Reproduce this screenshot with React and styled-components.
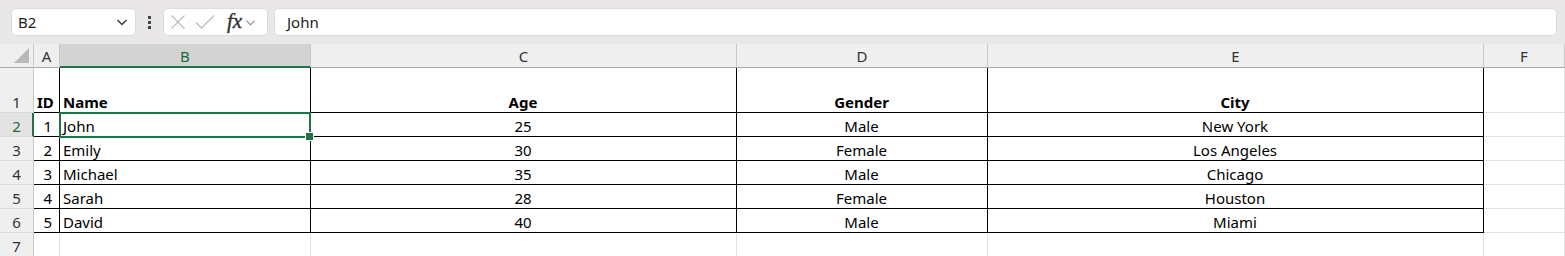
import React from 'react';
import styled, { createGlobalStyle } from 'styled-components';

const GlobalStyle = createGlobalStyle`
  html, body {
    margin: 0;
    padding: 0;
    background: #ffffff;
    font-family: "Noto Sans", "Open Sans", sans-serif;
    overflow: hidden;
  }
  * { box-sizing: border-box; }
`;

const Page = styled.div`
  width: 1565px;
  height: 256px;
  overflow: hidden;
  background: #fff;
`;

const Toolbar = styled.div`
  height: 44px;
  background: #e9e7e8;
  display: flex;
  align-items: center;
  padding: 0 8px 0 11px;
`;

const NameBox = styled.div`
  width: 125px;
  height: 28px;
  background: #fff;
  border: 1px solid #dedbdc;
  border-radius: 5px;
  display: flex;
  align-items: center;
  justify-content: space-between;
  padding: 0 7px 0 6px;
  font-size: 15px;
  color: #222;
`;

const Dots = styled.div`
  width: 27px;
  height: 28px;
  display: flex;
  flex-direction: column;
  align-items: center;
  justify-content: center;
  gap: 2px;

  span {
    width: 3px;
    height: 3px;
    background: #444;
  }
`;

const FxGroup = styled.div`
  width: 105px;
  height: 28px;
  background: #fff;
  border: 1px solid #dedbdc;
  border-radius: 5px;
  display: flex;
  align-items: center;
  padding: 0 4px 0 6px;
  gap: 9px;
`;

const FxLabel = styled.span`
  font-family: "Liberation Serif", "DejaVu Serif", serif;
  font-style: italic;
  font-size: 21px;
  line-height: 1;
  color: #333;
  margin-left: 3px;
  margin-right: -6px;
  padding-bottom: 2px;
  -webkit-text-stroke: 0.4px #333;
`;

const FormulaInput = styled.div`
  flex: 1;
  margin-left: 6px;
  height: 28px;
  background: #fff;
  border: 1px solid #dedbdc;
  border-radius: 5px;
  display: flex;
  align-items: center;
  padding-left: 12px;
  font-size: 15px;
  color: #222;
`;

const Sheet = styled.div`
  position: relative;
  display: grid;
  grid-template-columns: 34px 26px 251px 426px 251px 496px 81px;
  grid-template-rows: 24px 45px repeat(6, 24px);
`;

const Corner = styled.div`
  background: #efefef;
  border-right: 1px solid #c8c8c8;
  border-bottom: 1px solid #a9a9a9;
  position: relative;

  &::after {
    content: '';
    position: absolute;
    right: 4px;
    bottom: 4px;
    width: 0;
    height: 0;
    border-left: 15px solid transparent;
    border-bottom: 15px solid #b9b9b9;
  }
`;

const ColHeader = styled.div`
  background: ${p => (p.$active ? '#d3d3d3' : '#efefef')};
  color: ${p => (p.$active ? '#1e6b41' : '#333')};
  border-right: 1px solid #c8c8c8;
  border-bottom: ${p => (p.$active ? '2px solid #217346' : '1px solid #a9a9a9')};
  display: flex;
  align-items: center;
  justify-content: center;
  font-size: 15px;
  padding-top: ${p => (p.$active ? '1px' : '0')};
`;

const RowHeader = styled.div`
  background: ${p => (p.$active ? '#e3e3e3' : '#efefef')};
  color: ${p => (p.$active ? '#1e6b41' : '#333')};
  border-right: ${p => (p.$active ? '2px solid #217346' : '1px solid #c8c8c8')};
  border-bottom: 1px solid #dadada;
  display: flex;
  align-items: flex-end;
  justify-content: center;
  font-size: 15px;
  line-height: 20px;
  padding-bottom: 0;
  padding-left: ${p => (p.$active ? '1px' : '0')};
`;

const Cell = styled.div`
  border-right: 1px solid ${p => (p.$boxed ? '#000' : '#e1e1e1')};
  border-bottom: 1px solid ${p => (p.$boxed ? '#000' : '#e1e1e1')};
  display: flex;
  align-items: flex-end;
  justify-content: ${p =>
    p.$align === 'right' ? 'flex-end' : p.$align === 'center' ? 'center' : 'flex-start'};
  padding: 0 ${p => (p.$align === 'right' ? '7px' : '4px')} 0 3px;
  font-size: 15px;
  line-height: 20px;
  font-weight: ${p => (p.$bold ? 700 : 400)};
  color: #000;
  white-space: nowrap;
`;

const Selection = styled.div`
  position: absolute;
  left: 59px;
  top: 68px;
  width: 252px;
  height: 26px;
  border: 2px solid #217346;
  pointer-events: none;

  &::after {
    content: '';
    position: absolute;
    right: -5px;
    bottom: -5px;
    width: 7px;
    height: 7px;
    background: #217346;
    border: 1px solid #fff;
  }
`;

const Chevron = ({ size = 12, color = '#333' }) => (
  <svg width={size} height={size} viewBox="0 0 12 12" fill="none">
    <path d="M1.5 4 L6 8.5 L10.5 4" stroke={color} strokeWidth="1.3" />
  </svg>
);

const CrossIcon = () => (
  <svg width="16" height="16" viewBox="0 0 16 16" fill="none">
    <path d="M1.5 1.5 L14.5 14.5 M14.5 1.5 L1.5 14.5" stroke="#bdbdbd" strokeWidth="1.3" />
  </svg>
);

const CheckIcon = () => (
  <svg width="20" height="16" viewBox="0 0 20 16" fill="none">
    <path d="M1 8.5 L6.5 14 L19 1.5" stroke="#bdbdbd" strokeWidth="1.3" />
  </svg>
);

const columns = ['A', 'B', 'C', 'D', 'E', 'F'];
const aligns = ['left', 'left', 'center', 'center', 'center'];

const header = ['ID', 'Name', 'Age', 'Gender', 'City'];
const people = [
  ['1', 'John', '25', 'Male', 'New York'],
  ['2', 'Emily', '30', 'Female', 'Los Angeles'],
  ['3', 'Michael', '35', 'Male', 'Chicago'],
  ['4', 'Sarah', '28', 'Female', 'Houston'],
  ['5', 'David', '40', 'Male', 'Miami'],
];

const App = () => (
  <Page>
    <GlobalStyle />
    <Toolbar>
      <NameBox>
        <span>B2</span>
        <Chevron />
      </NameBox>
      <Dots>
        <span />
        <span />
        <span />
      </Dots>
      <FxGroup>
        <CrossIcon />
        <CheckIcon />
        <FxLabel>fx</FxLabel>
        <Chevron size={11} color="#999" />
      </FxGroup>
      <FormulaInput>John</FormulaInput>
    </Toolbar>

    <Sheet>
      <Corner />
      {columns.map(c => (
        <ColHeader key={c} $active={c === 'B'}>{c}</ColHeader>
      ))}

      <RowHeader>1</RowHeader>
      {header.map((h, i) => (
        <Cell key={h} $boxed $bold $align={aligns[i]}>{h}</Cell>
      ))}
      <Cell />

      {people.map((row, r) => (
        <React.Fragment key={row[0]}>
          <RowHeader $active={r === 0}>{r + 2}</RowHeader>
          {row.map((v, i) => (
            <Cell key={i} $boxed $align={i === 0 ? 'right' : aligns[i]}>{v}</Cell>
          ))}
          <Cell />
        </React.Fragment>
      ))}

      <RowHeader>7</RowHeader>
      {header.map(h => <Cell key={h} />)}
      <Cell />

      <Selection />
    </Sheet>
  </Page>
);

export default App;
